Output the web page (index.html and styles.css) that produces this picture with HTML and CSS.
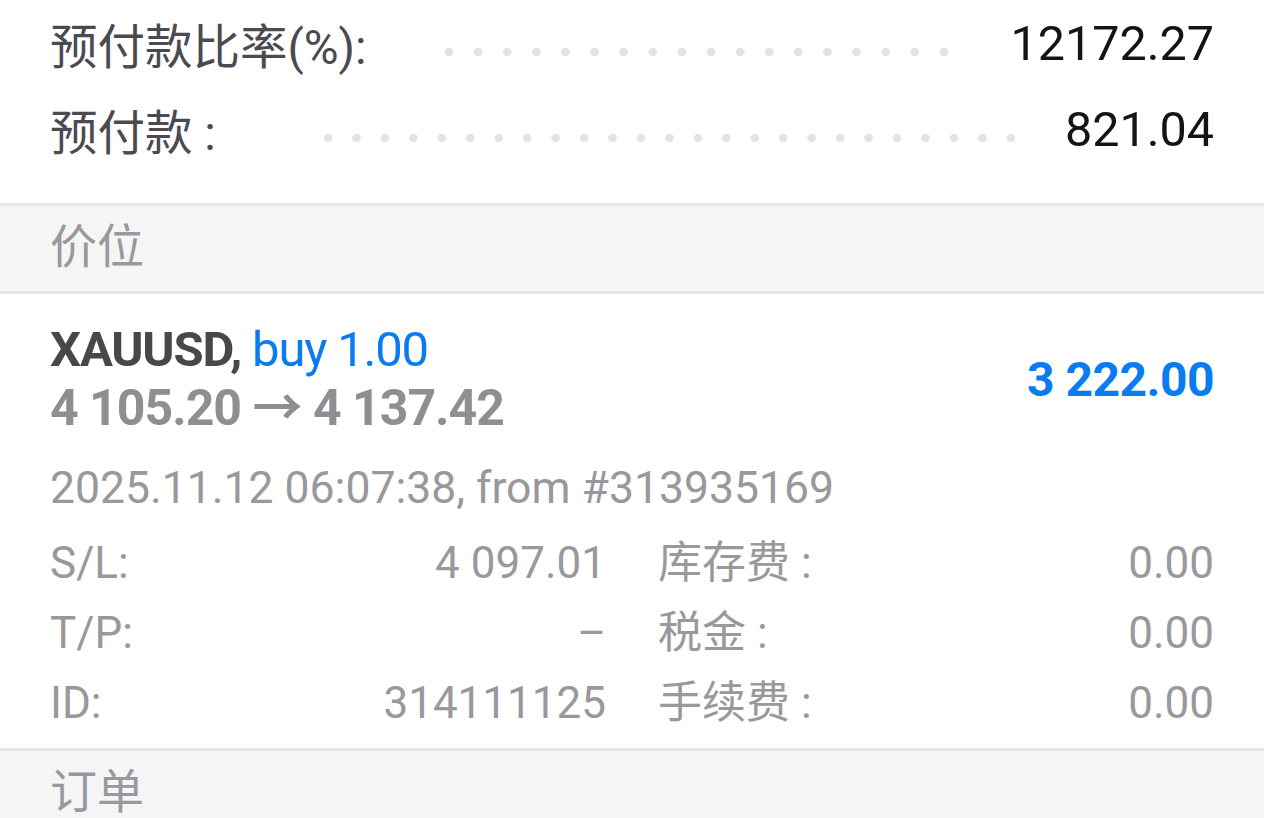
FILE: index.html
```html
<!DOCTYPE html>
<html lang="zh-CN">

<head>
    <meta charset="UTF-8">
    <meta name="viewport" content="width=device-width, initial-scale=1.0">
    <title>交易</title>
    <link rel="stylesheet" href="styles.css">
</head>

<body>
    <!-- Account summary -->
    <div class="summary">
        <div class="summary-row">
            <span class="summary-label">预付款比率(%):</span>
            <span class="summary-dots"></span>
            <span class="summary-value">12172.27</span>
        </div>
        <div class="summary-row">
            <span class="summary-label">预付款 :</span>
            <span class="summary-dots summary-dots-wide"></span>
            <span class="summary-value">821.04</span>
        </div>
    </div>

    <div class="section-header">价位</div>

    <!-- Position -->
    <div class="position">
        <div class="position-top">
            <div class="position-title">
                <div class="position-line1">
                    <span class="position-symbol">XAUUSD,</span>
                    <span class="position-type">buy 1.00</span>
                </div>
                <div class="position-prices">4 105.20 → 4 137.42</div>
            </div>
            <div class="position-profit">3 222.00</div>
        </div>
        <div class="position-date">2025.11.12 06:07:38, from #313935169</div>
        <div class="position-details">
            <div class="detail-item"><span>S/L:</span><span>4 097.01</span></div>
            <div class="detail-item"><span>库存费 :</span><span>0.00</span></div>
            <div class="detail-item"><span>T/P:</span><span>–</span></div>
            <div class="detail-item"><span>税金 :</span><span>0.00</span></div>
            <div class="detail-item"><span>ID:</span><span>314111125</span></div>
            <div class="detail-item"><span>手续费 :</span><span>0.00</span></div>
        </div>
    </div>

    <div class="section-header section-header-last">订单</div>
</body>

</html>
```

FILE: styles.css
```css
body {
    margin: 0;
    background-color: #ffffff;
    font-family: Roboto, "Noto Sans CJK SC", sans-serif;
}

/* Summary rows */
.summary {
    padding: 0 50px 31px 50px;
}

.summary-row {
    display: flex;
    align-items: center;
    height: 86px;
}

.summary-label {
    font-size: 47.5px;
    color: #4a4a50;
}

.summary-dots {
    flex: 1;
    align-self: stretch;
    margin: 0 52px 0 68px;
    background-image: radial-gradient(circle, #e3e3e3 4px, transparent 4.5px);
    background-size: 28px 10px;
    background-repeat: space no-repeat;
    background-position: 0 47px;
}

.summary-dots-wide {
    margin: 0 40px 0 98px;
}

.summary-value {
    font-size: 48.5px;
    color: #141414;
}

/* Section headers */
.section-header {
    background-color: #f5f5f5;
    border-top: 3px solid #e6e6e6;
    border-bottom: 3px solid #e6e6e6;
    height: 85px;
    line-height: 82px;
    padding-left: 50px;
    font-size: 47px;
    color: #98989e;
}

.section-header-last {
    border-bottom: none;
    height: 70px;
}

/* Position */
.position {
    padding: 27px 50px 10px 50px;
}

.position-top {
    display: flex;
    justify-content: space-between;
    align-items: center;
}

.position-line1 {
    line-height: 58px;
    font-size: 49px;
    letter-spacing: -1.2px;
}

.position-symbol {
    font-weight: 700;
    color: #48484c;
}

.position-type {
    color: #0a7cf0;
}

.position-prices {
    line-height: 58px;
    font-size: 50px;
    font-weight: 700;
    letter-spacing: -1px;
    color: #8e8e93;
}

.position-profit {
    font-size: 48px;
    font-weight: 700;
    color: #0a7cf0;
    letter-spacing: -0.5px;
}

.position-date {
    margin-top: 21px;
    line-height: 60px;
    font-size: 44.5px;
    color: #98989d;
}

.position-details {
    display: grid;
    grid-template-columns: 1fr 1fr;
    column-gap: 52px;
    margin-top: 10px;
}

.detail-item {
    display: flex;
    justify-content: space-between;
    line-height: 70px;
    font-size: 44px;
    color: #98989d;
}
```
